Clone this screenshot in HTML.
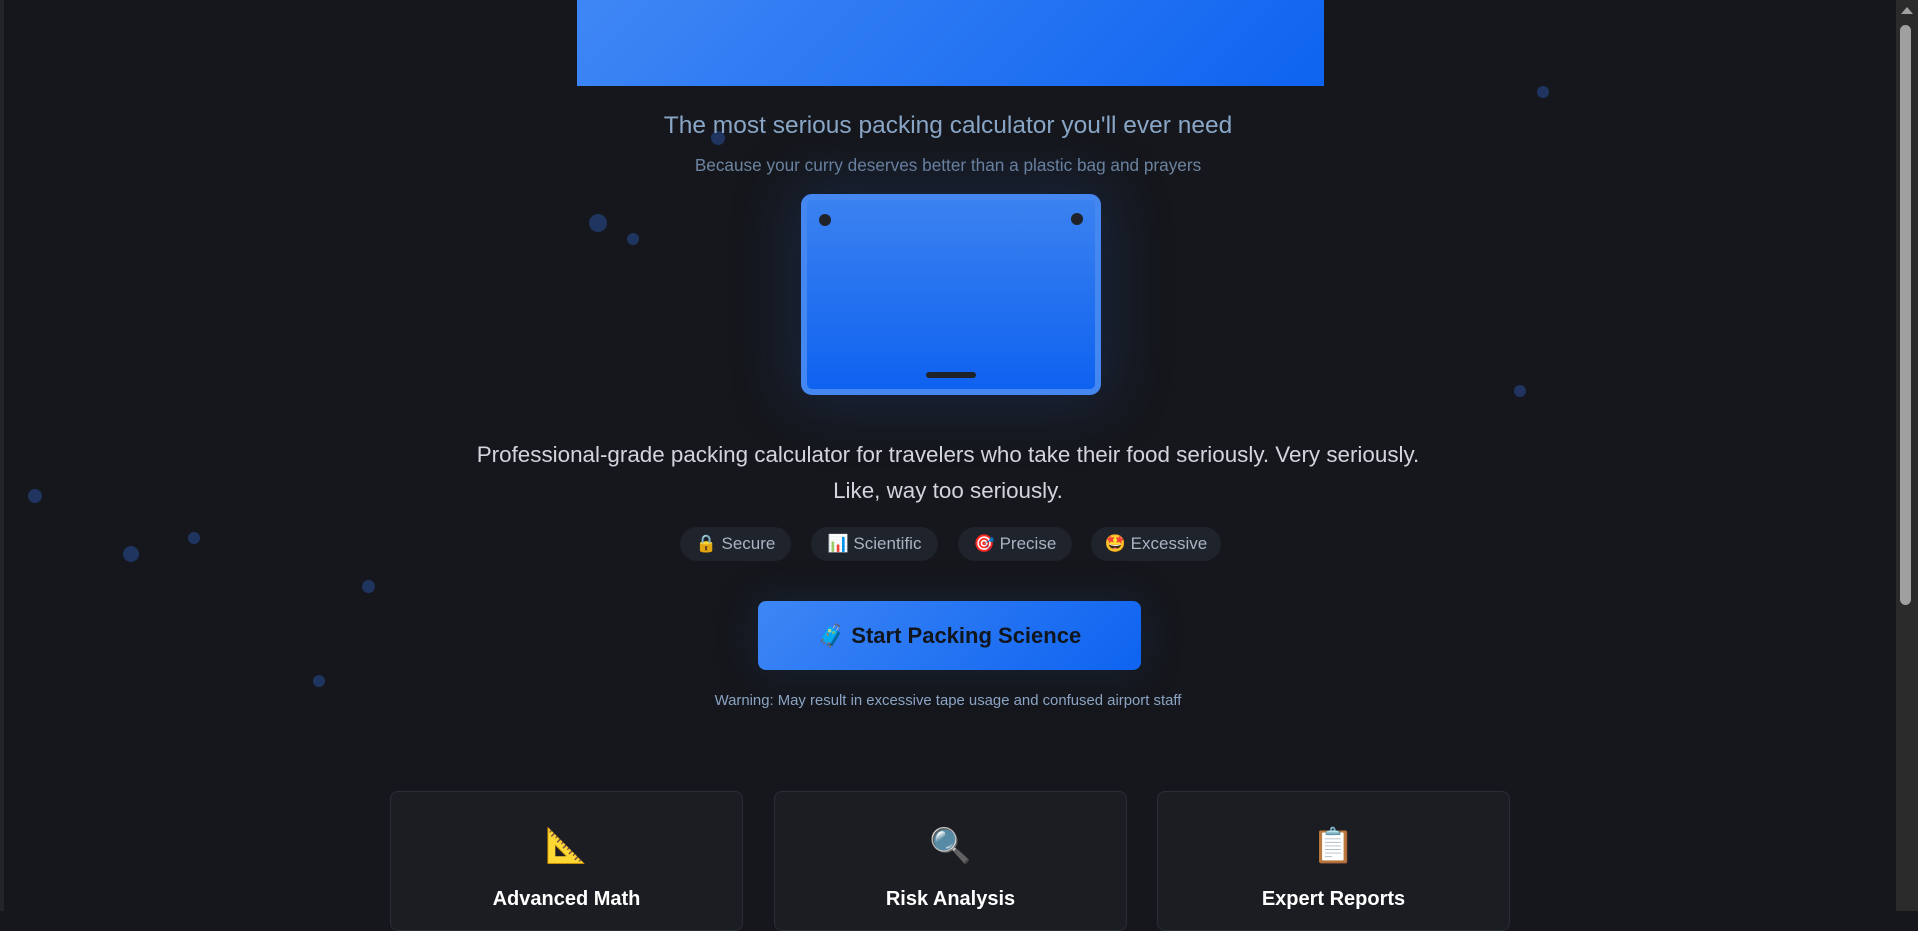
<!DOCTYPE html>
<html><head><meta charset="utf-8"><style>
*{margin:0;padding:0;box-sizing:border-box}
html,body{width:1918px;height:911px;overflow:hidden;background:#15171c;font-family:"Liberation Sans","Noto Sans CJK JP",sans-serif}
.abs{position:absolute}
.dot{position:absolute;border-radius:50%;background:#1f3560}
.banner{left:577px;top:0;width:747px;height:86px;background:linear-gradient(135deg,#3f87f5,#0e63f0)}
.c{position:absolute;left:0;width:1896px;text-align:center}
.box{left:801px;top:194px;width:300px;height:201px;border-radius:11px;background:linear-gradient(180deg,#3b82f0,#0f62f0);border:6px solid #4587f0;box-shadow:0 0 60px 10px rgba(40,80,160,.25)}
.hole{position:absolute;width:12px;height:12px;border-radius:50%;background:#1f2329}
.badge{position:absolute;top:527px;height:34px;border-radius:17px;background:#1f232b;color:#a9b3c2;font-size:17px;line-height:34px;text-align:center}
.btn{left:758px;top:601px;width:383px;height:69px;border-radius:8px;background:linear-gradient(135deg,#3d86f5,#0e63f0);color:#11151c;font-weight:bold;font-size:22px;line-height:69px;text-align:center;box-shadow:0 0 40px rgba(30,60,120,.3)}
.card{position:absolute;top:791px;width:353px;height:140px;background:#1b1d23;border:1px solid #2a2e36;border-radius:8px;text-align:center;color:#fff}
.card .i{font-size:34px;margin-top:34px;height:50px}
.card .t{font-weight:bold;font-size:20px;margin-top:12px}
.sb{left:1896px;top:0;width:22px;height:911px;background:#2b2b2b}
.thumb{left:1900px;top:25px;width:11px;height:580px;border-radius:6px;background:#a0a0a0}
</style></head><body>
<div class="abs" style="left:0;top:0;width:4px;height:911px;background:#222428"></div>
<div class="dot" style="left:711px;top:131px;width:14px;height:14px"></div>
<div class="dot" style="left:589px;top:214px;width:18px;height:18px"></div>
<div class="dot" style="left:627px;top:233px;width:12px;height:12px"></div>
<div class="dot" style="left:1537px;top:86px;width:12px;height:12px"></div>
<div class="dot" style="left:1514px;top:385px;width:12px;height:12px"></div>
<div class="dot" style="left:28px;top:489px;width:14px;height:14px"></div>
<div class="dot" style="left:123px;top:546px;width:16px;height:16px"></div>
<div class="dot" style="left:188px;top:532px;width:12px;height:12px"></div>
<div class="dot" style="left:362px;top:580px;width:13px;height:13px"></div>
<div class="dot" style="left:313px;top:675px;width:12px;height:12px"></div>
<div class="abs banner"></div>
<div class="c" style="top:112px;font-size:24.5px;color:#89a6c6">The most serious packing calculator you'll ever need</div>
<div class="c" style="top:155px;font-size:17.2px;color:#6d84a0">Because your curry deserves better than a plastic bag and prayers</div>
<div class="abs box">
<div class="hole" style="left:12px;top:14px"></div>
<div class="hole" style="right:12px;top:13px"></div>
<div class="abs" style="left:119px;top:172px;width:50px;height:6px;border-radius:3px;background:#1f2329"></div>
</div>
<div class="c" style="top:437px;font-size:22.4px;line-height:36px;color:#d2d6dc">Professional-grade packing calculator for travelers who take their food seriously. Very seriously.<br>Like, way too seriously.</div>
<div class="badge" style="left:680px;width:111px">🔒 Secure</div>
<div class="badge" style="left:811px;width:127px">📊 Scientific</div>
<div class="badge" style="left:958px;width:114px">🎯 Precise</div>
<div class="badge" style="left:1091px;width:130px">🤩 Excessive</div>
<div class="abs btn">🧳 Start Packing Science</div>
<div class="c" style="top:693px;font-size:14.9px;color:#8ba4c4">Warning: May result in excessive tape usage and confused airport staff</div>
<div class="card" style="left:390px"><div class="i">📐</div><div class="t">Advanced Math</div></div>
<div class="card" style="left:774px"><div class="i">🔍</div><div class="t">Risk Analysis</div></div>
<div class="card" style="left:1157px"><div class="i">📋</div><div class="t">Expert Reports</div></div>
<div class="abs sb"></div>
<div class="abs" style="left:1901px;top:7px;width:0;height:0;border-left:6px solid transparent;border-right:6px solid transparent;border-bottom:7px solid #a0a0a0"></div>
<div class="abs thumb"></div>
</body></html>
